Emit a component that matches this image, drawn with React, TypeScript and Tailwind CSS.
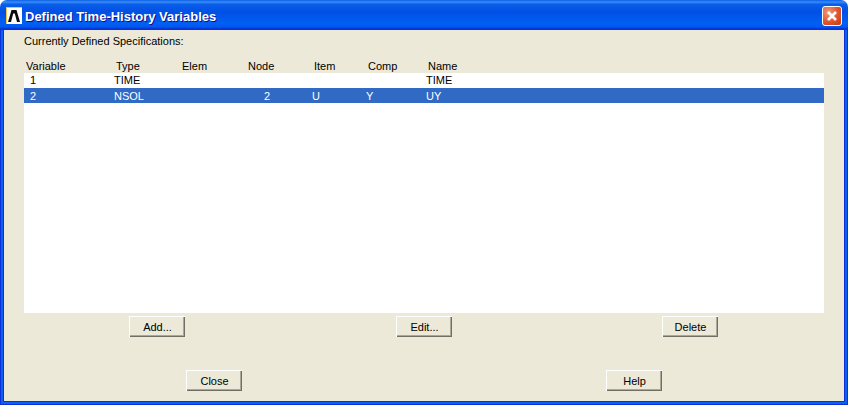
const font = "font-['Liberation_Sans',Arial,sans-serif]";

function Btn({ label }: { label: string }) {
  return (
    <button className="w-[56px] h-[21px] flex items-center justify-center bg-[#ece9d8] text-black text-[11px] leading-[13px] border-t border-l border-t-white border-l-white shadow-[inset_-1px_-1px_0_#716f64,inset_-2px_-2px_0_#aca899]">
      {label}
    </button>
  );
}

function Row({ cells, selected }: { cells: string[]; selected?: boolean }) {
  return (
    <div className={`h-[15px] flex items-center text-[11px] leading-[15px] ${selected ? "bg-[#316ac5] text-white pt-[1px]" : "text-black"}`}>
      <span className="w-[90px] pl-[6px]">{cells[0]}</span>
      <span className="w-[66px]">{cells[1]}</span>
      <span className="w-[66px]">{cells[2]}</span>
      <span className="w-[60px] pr-[36px] text-right">{cells[3]}</span>
      <span className="w-[60px] pl-[6px]">{cells[4]}</span>
      <span className="w-[60px]">{cells[5]}</span>
      <span>{cells[6]}</span>
    </div>
  );
}

export default function App() {
  return (
    <div className={`w-[848px] h-[405px] flex flex-col bg-white ${font}`}>
      <div className="h-[30px] shrink-0 rounded-t-[7px] flex items-center pl-[6px] pr-[6px] bg-[linear-gradient(180deg,#0a5fe8,#3a8cf5_7%,#0a5ee8_14%,#0050e6_40%,#0060f4_80%,#0058ee_90%,#0831d9_96%,#0831d9)]">
        <svg width="16" height="17" viewBox="0 0 16 17" className="shrink-0 mt-[1px]">
          <rect width="16" height="17" fill="#f5c242" />
          <rect x="1" y="1" width="15" height="16" fill="#fff" />
          <path d="M2 15 L5.5 3 H10.5 L14 15 H11 L8.8 6.5 H7.2 L5 15 Z" fill="#0b0b0b" />
        </svg>
        <span className="ml-[3px] mt-[4px] text-white text-[13px] font-bold [text-shadow:1px_1px_0_#0f1089]">
          Defined Time-History Variables
        </span>
        <button className="ml-auto w-[20px] h-[20px] mt-[2px] rounded-[3px] border border-white bg-[radial-gradient(circle_at_30%_30%,#f09a7c,#e0542c_55%,#c23a12)] flex items-center justify-center">
          <svg width="14" height="14" viewBox="0 0 14 14">
            <path d="M3 3 L11 11 M11 3 L3 11" stroke="#fff" strokeWidth="2.6" />
          </svg>
        </button>
      </div>
      <div className="flex-1 min-h-0 flex flex-col bg-[#ece9d8] border-x border-b border-x-[#0831d9] border-b-[#0831d9] px-[23px] pb-[3px] shadow-[inset_2px_0_0_#0f5fee,inset_-2px_0_0_#0f5fee,inset_0_-2px_0_#0f5fee,inset_3px_0_0_#0831d9,inset_-3px_0_0_#0831d9,inset_0_-3px_0_#0831d9] text-black">
        <div className="h-[24px] flex items-center text-[11px] mt-[-1px]">Currently Defined Specifications:</div>
        <div className="mt-[6px] h-[14px] flex items-center text-[11px] leading-[14px] pb-px">
          <span className="w-[92px] pl-[2px]">Variable</span>
          <span className="w-[66px]">Type</span>
          <span className="w-[66px]">Elem</span>
          <span className="w-[66px]">Node</span>
          <span className="w-[54px]">Item</span>
          <span className="w-[60px]">Comp</span>
          <span>Name</span>
        </div>
        <div className="h-[240px] bg-white">
          <Row cells={["1", "TIME", "", "", "", "", "TIME"]} />
          <Row selected cells={["2", "NSOL", "", "2", "U", "Y", "UY"]} />
        </div>
        <div className="mt-[3px] grid grid-cols-[266px_268px_264px] justify-items-center">
          <Btn label="Add..." />
          <Btn label="Edit..." />
          <Btn label="Delete" />
        </div>
        <div className="mt-[33px] flex justify-between px-[162px]">
          <Btn label="Close" />
          <Btn label="Help" />
        </div>
      </div>
    </div>
  );
}
